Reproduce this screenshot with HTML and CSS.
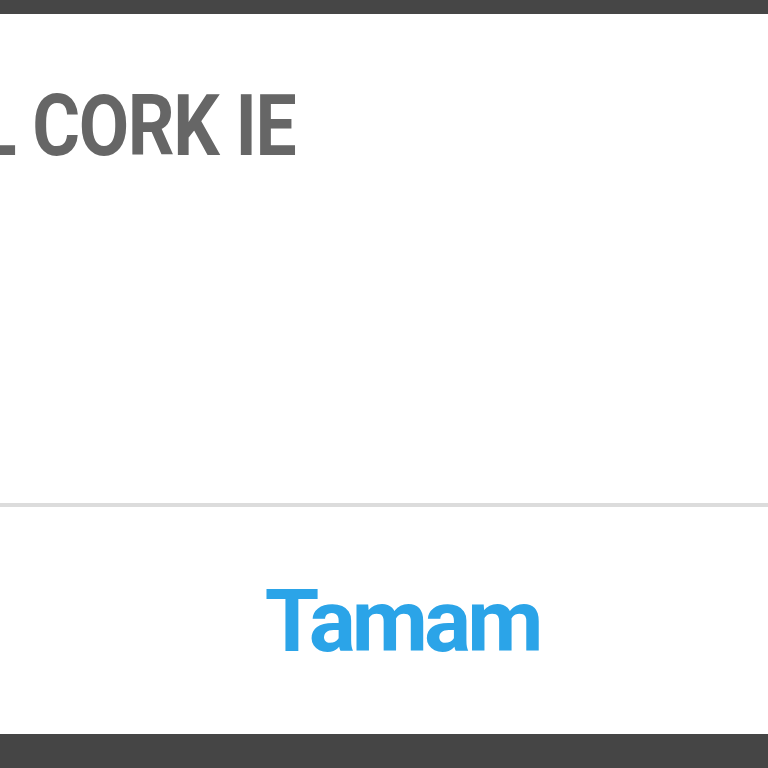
FILE: index.html
```html
<!DOCTYPE html>
<html>
<head>
<meta charset="utf-8">
<link rel="stylesheet" href="styles.css">
</head>
<body>
<div class="screen">
  <div class="topbar"></div>
  <div class="dialog">
    <div class="body">
      <div class="title">L CORK IE</div>
    </div>
    <div class="divider"></div>
    <div class="actions">
      <span class="ok">Tamam</span>
    </div>
  </div>
  <div class="bottombar"></div>
</div>
</body>
</html>
```
FILE: styles.css
```css
html, body {
  margin: 0;
  padding: 0;
  background: #ffffff;
}
.screen {
  width: 768px;
  height: 768px;
  display: flex;
  flex-direction: column;
  overflow: hidden;
  font-family: Roboto, "Liberation Sans", sans-serif;
}
.topbar {
  height: 14px;
  background: #464646;
  flex: none;
}
.dialog {
  flex: 1;
  display: flex;
  flex-direction: column;
  background: #ffffff;
}
.body {
  height: 489px;
  overflow: hidden;
}
.title {
  margin-left: -23px;
  margin-top: 62px;
  font-size: 85px;
  line-height: 100px;
  font-weight: 700;
  color: #666666;
  letter-spacing: -1.5px;
  white-space: nowrap;
  transform: scaleX(0.86);
  transform-origin: left center;
}
.divider {
  height: 4px;
  background: #dcdcdc;
  flex: none;
}
.actions {
  flex: 1;
  display: flex;
  justify-content: center;
  align-items: center;
  padding-left: 36px;
}
.ok {
  font-size: 88px;
  font-weight: 700;
  color: #2ba4e8;
  letter-spacing: -4px;
  line-height: 1;
}
.bottombar {
  height: 34px;
  background: #454545;
  flex: none;
}
```
